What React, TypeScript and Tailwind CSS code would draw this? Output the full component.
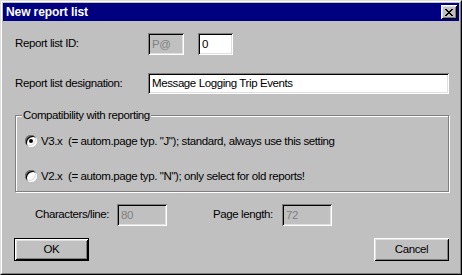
import React from 'react';

const sunken =
  'shadow-[inset_1px_1px_0_#808080,inset_-1px_-1px_0_#fff,inset_2px_2px_0_#000,inset_-2px_-2px_0_#dfdfdf]';
const raised =
  'shadow-[inset_1px_1px_0_#fff,inset_-1px_-1px_0_#000,inset_2px_2px_0_#dfdfdf,inset_-2px_-2px_0_#808080]';

const EditBox: React.FC<{ value: string; width: string; disabled?: boolean; height?: string }> = ({
  value,
  width,
  disabled,
  height = 'h-[22px]'
}) => (
  <div
    className={`${width} ${height} ${sunken} ${disabled ? 'bg-[#c0c0c0] text-[#808080]' : 'bg-white text-black'} flex items-center pl-[4px] leading-[13px]`}
  >
    {value}
  </div>
);

const Radio: React.FC<{ checked?: boolean; label: string }> = ({ checked, label }) => (
  <div className="flex items-center h-[14px]">
    <span className="w-3 h-3 rounded-full bg-white shadow-[inset_1px_1px_0_#808080,inset_-1px_-1px_0_#fff,inset_2px_2px_0_#000,inset_-2px_-2px_0_#dfdfdf] flex items-center justify-center">
      {checked && <span className="w-1 h-1 rounded-full bg-black" />}
    </span>
    <span className="ml-[4px] whitespace-pre leading-[13px]">{label}</span>
  </div>
);

const CloseGlyph = () => (
  <svg width="8" height="7" viewBox="0 0 8 7" fill="black" shapeRendering="crispEdges">
    <rect x="0" y="0" width="2" height="1" />
    <rect x="6" y="0" width="2" height="1" />
    <rect x="1" y="1" width="2" height="1" />
    <rect x="5" y="1" width="2" height="1" />
    <rect x="2" y="2" width="4" height="1" />
    <rect x="3" y="3" width="2" height="1" />
    <rect x="2" y="4" width="4" height="1" />
    <rect x="1" y="5" width="2" height="1" />
    <rect x="5" y="5" width="2" height="1" />
    <rect x="0" y="6" width="2" height="1" />
    <rect x="6" y="6" width="2" height="1" />
  </svg>
);

export default function App() {
  return (
    <div className="w-[462px] h-[275px] bg-[#c0c0c0] font-['Liberation_Sans',Arial,sans-serif] text-[11.5px] tracking-[-0.4px] text-black border border-t-[#dfdfdf] border-l-[#dfdfdf] border-r-black border-b-black">
      <div className="h-full border border-t-white border-l-white border-r-[#808080] border-b-[#808080] p-[1px] flex flex-col">
        {/* Title bar */}
        <div className="h-[18px] bg-[#000080] flex items-center justify-between pl-[3px] pr-[2px]">
          <span className="text-white font-bold text-[12px] tracking-[-0.1px] leading-none">New report list</span>
          <button className={`w-[16px] h-[14px] bg-[#c0c0c0] ${raised} flex items-center justify-center`}>
            <CloseGlyph />
          </button>
        </div>

        {/* Content */}
        <div className="pl-[12px] pr-[9px] flex flex-col">
          <div className="mt-[12px] h-[22px] flex items-center">
            <span className="w-[133px]">Report list ID:</span>
            <EditBox value="P@" width="w-[36px]" disabled />
            <div className="ml-[14px]">
              <EditBox value="0" width="w-[35px]" />
            </div>
          </div>

          <div className="mt-[18px] h-[21px] flex items-center">
            <span className="w-[133px]">Report list designation:</span>
            <EditBox value="Message Logging Trip Events" width="w-[301px]" height="h-[21px]" />
          </div>

          {/* Group box */}
          <div className="mt-[21px] relative h-[77px] w-[434px] border border-[#808080] shadow-[inset_1px_1px_0_#fff,1px_1px_0_#fff] pt-[18px] pl-[9px]">
            <span className="absolute left-[6px] -top-[7px] px-[1px] bg-[#c0c0c0] leading-[13px]">
              Compatibility with reporting
            </span>
            <Radio checked label={'V3.x  (= autom.page typ. "J"); standard, always use this setting'} />
            <div className="mt-[21px]">
              <Radio label={'V2.x  (= autom.page typ. "N"); only select for old reports!'} />
            </div>
          </div>

          <div className="mt-[12px] h-[22px] flex items-center pl-[20px]">
            <span className="w-[82px]">Characters/line:</span>
            <EditBox value="80" width="w-[50px]" disabled />
            <span className="ml-[46px] w-[69px]">Page length:</span>
            <EditBox value="72" width="w-[50px]" disabled />
          </div>

          <div className="mt-[12px] h-[23px] flex justify-between">
            <button className="-ml-[1px] w-[75px] h-[23px] border border-black bg-[#c0c0c0] shadow-[inset_1px_1px_0_#fff,inset_-1px_-1px_0_#000,inset_2px_2px_0_#dfdfdf,inset_-2px_-2px_0_#808080] flex items-center justify-center leading-none">
              OK
            </button>
            <button className={`mr-[1px] w-[75px] h-[23px] bg-[#c0c0c0] ${raised} flex items-center justify-center leading-none`}>
              Cancel
            </button>
          </div>
        </div>
      </div>
    </div>
  );
}
